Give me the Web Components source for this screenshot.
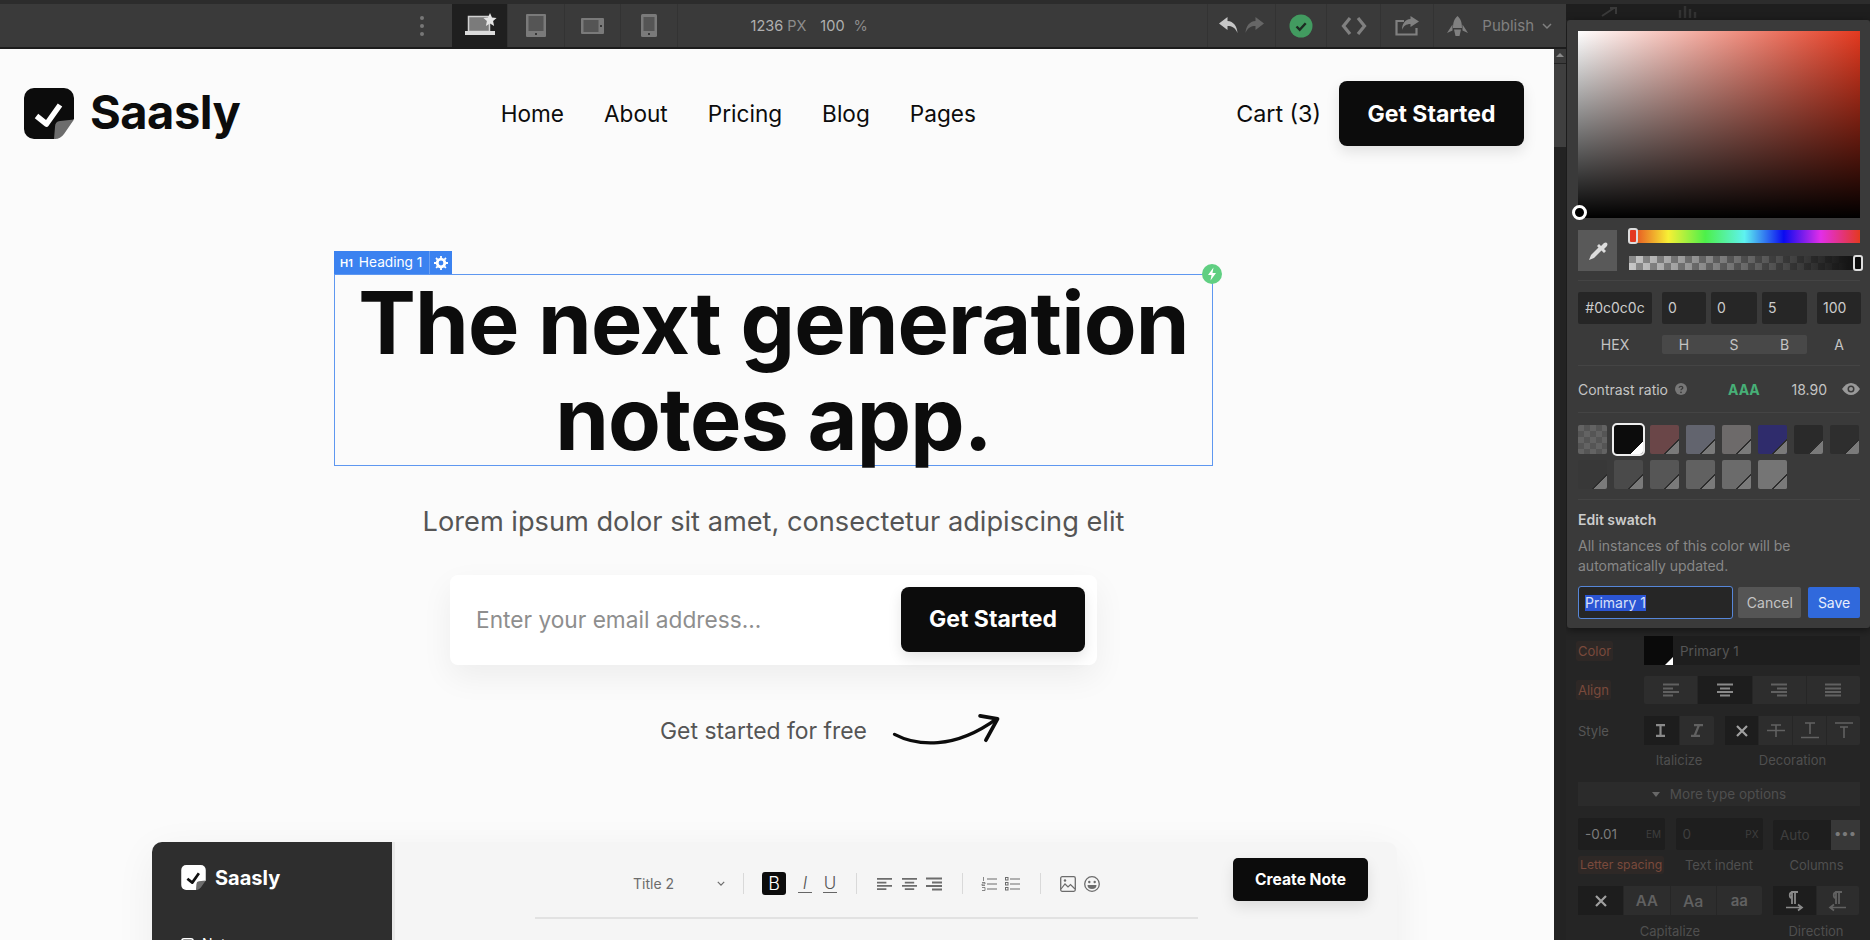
<!DOCTYPE html>
<html>
<head>
<meta charset="utf-8">
<title>Saasly</title>
<style>
  html, body { margin: 0; height: 940px; overflow: hidden; background: #1f1f1f; font-family: Inter, "Liberation Sans", sans-serif; }
  #app { display: grid; grid-template-columns: 1566px 304px; height: 940px; }
  #left { display: flex; flex-direction: column; height: 940px; min-width: 0; }
  #work { display: flex; flex: 1; min-height: 0; }
</style>
</head>
<body>
<div id="app">
  <div id="left">
    <editor-topbar></editor-topbar>
    <div id="work">
      <site-canvas></site-canvas>
      <canvas-scrollbar></canvas-scrollbar>
    </div>
  </div>
  <style-panel></style-panel>
</div>

<script>
const ICONS = {
  laptop: ['32 24', '<rect x="3.5" y="3.5" width="21" height="15" fill="#7b7b7b" stroke="#d0d0d0" stroke-width="1.5"/><rect x="0" y="18" width="30" height="4" fill="#dcdcdc"/><path d="M25 0l2 4.6 4.6.5-3.500 3 1 4.900-4.100-2.500-4.100 2.500 1-4.900-3.500-3 4.600-.5z" fill="#e4e4e4"/>'],
  tabletP: ['20 23', '<rect width="20" height="23" rx="1" fill="#7a7a7a"/><rect x="2.500" y="2" width="15" height="15" fill="#555"/><circle cx="10" cy="20" r="1" fill="#222"/>'],
  tabletL: ['23 16', '<rect width="23" height="16" rx="1" fill="#7a7a7a"/><rect x="2.500" y="2" width="15" height="12" fill="#555"/><circle cx="20" cy="8" r="1" fill="#222"/>'],
  phone: ['16 23', '<rect width="16" height="23" rx="1.500" fill="#7a7a7a"/><rect x="2.500" y="3" width="11" height="14" fill="#555"/><circle cx="8" cy="20" r="1" fill="#222"/>'],
  undo: ['20 17', '<path d="M8.500 0L0 6.500 8.500 13V9c4.500 0 7.500 1.500 10 7C18 9 14.500 4.500 8.500 4z" fill="currentColor"/>'],
  redo: ['20 17', '<path d="M11.500 0L20 6.500 11.500 13V9C7 9 4 10.500 1.500 16 2 9 5.500 4.500 11.500 4z" fill="currentColor"/>'],
  ok: ['24 24', '<circle cx="12" cy="12" r="11.500" fill="#429b60"/><path d="M7.500 12.500l3.200 3.200 6-6.500" fill="none" stroke="#1d2b22" stroke-width="2.400"/>'],
  code: ['26 20', '<path d="M9 2L2.500 10 9 18M17 2l6.500 8L17 18" fill="none" stroke="currentColor" stroke-width="3.200"/>'],
  share: ['24 20', '<path d="M9 5H1.500v13.500h20V12" fill="none" stroke="currentColor" stroke-width="2.200"/><path d="M15.500 0L24 5.500 15.500 11V8C11 8 8.500 10 7 14 7 8 10 3.500 15.500 3z" fill="currentColor"/>'],
  rocket: ['21 20', '<path d="M10.500 0C14 3 15 7 15 12H6c0-5 1-9 4.500-12zM5.500 8.500L0 17l5.500-2.500zM15.500 8.500L21 17l-5.500-2.500zM7 13.500h7L12.500 20h-4z" fill="currentColor"/>'],
  chevron: ['10 6', '<path d="M1 1l4 4 4-4" fill="none" stroke="currentColor" stroke-width="1.500"/>'],
  gear: ['14 14', '<circle cx="7" cy="7" r="3.800" fill="none" stroke="#fff" stroke-width="2.800"/><path d="M7 0v14M0 7h14M2 2l10 10M12 2L2 12" stroke="#fff" stroke-width="1.800" stroke-dasharray="2.200 9.600"/>'],
  bolt: ['20 20', '<circle cx="10" cy="10" r="10" fill="#60cf82"/><path d="M11.500 3.500L6 11h3.500L8.500 16.500 14 9h-3.500z" fill="#fff"/>'],
  logo: ['50 51', '<path d="M10 0h30a10 10 0 0 1 10 10v21L31 51H10A10 10 0 0 1 0 41V10A10 10 0 0 1 10 0z" fill="currentColor"/><path d="M50 31.500L36 33q-5 .5-5 6l-1 12q6 .5 10-5z" fill="#6d6d6d"/><path d="M12.500 28l10 8 13.500-19" fill="none" stroke="var(--check,#fff)" stroke-width="5.500" stroke-linejoin="round"/>'],
  arrow: ['110 36', '<path d="M1 23C24 35 62 39 106 7" fill="none" stroke="#0c0c0c" stroke-width="3.400" stroke-linecap="round"/><path d="M89 4l18 3-12 22" fill="none" stroke="#0c0c0c" stroke-width="3.800" stroke-linecap="round" stroke-linejoin="round"/>'],
  dropper: ['20 20', '<path d="M1 19l2-5 8-8 3 3-8 8z" fill="#ddd"/><path d="M11 3l2 2 3-3q2-1 3 0 1 1 0 3l-3 3 2 2-2 2-7-7z" fill="#ddd"/>'],
  help: ['12 12', '<circle cx="6" cy="6" r="6" fill="#777"/><path d="M4.200 4.800C4.200 2.800 7.800 2.800 7.800 4.800 7.800 6 6 6 6 7.200" fill="none" stroke="#3a3a3a" stroke-width="1.300"/><circle cx="6" cy="9.300" r=".9" fill="#3a3a3a"/>'],
  eye: ['18 12', '<path d="M0 6Q4 0 9 0t9 6q-4 6-9 6T0 6z" fill="#999"/><circle cx="9" cy="6" r="3.500" fill="#3a3a3a"/><circle cx="9" cy="6" r="2" fill="#999"/>'],
  left: ['16 14', '<path d="M0 1.500h16M0 5.500h10M0 9h16M0 12.500h10" stroke="currentColor" stroke-width="2"/>'],
  center: ['16 14', '<path d="M0 1.500h16M3 5.500h10M0 9h16M3 12.500h10" stroke="currentColor" stroke-width="2"/>'],
  right: ['16 14', '<path d="M0 1.500h16M6 5.500h10M0 9h16M6 12.500h10" stroke="currentColor" stroke-width="2"/>'],
  justify: ['16 14', '<path d="M0 1.500h16M0 5.500h16M0 9h16M0 12.500h16" stroke="currentColor" stroke-width="2"/>'],
  ibeam: ['10 13', '<path d="M0 1.200h9M0 11.800h9M4.500 1v11" stroke="currentColor" stroke-width="2.200"/>'],
  italic: ['12 13', '<path d="M3 1.200h9M0 11.800h9M8 1L3.500 12" stroke="currentColor" stroke-width="2.200"/>'],
  x: ['12 12', '<path d="M1 1l10 10M11 1L1 11" stroke="currentColor" stroke-width="2.200"/>'],
  strike: ['18 14', '<path d="M4 1h10M9 1v12M0 6.500h18" stroke="currentColor" stroke-width="1.600"/>'],
  under: ['18 17', '<path d="M4 1h10M9 1v11M0 15.500h18" stroke="currentColor" stroke-width="1.600"/>'],
  over: ['18 17', '<path d="M0 1h18M5 5h8M9 5v11" stroke="currentColor" stroke-width="1.600"/>'],
  ltr: ['17 20', '<path d="M6 13V1h6M9 1v12M6 1.500C3 1.500 3 7 6 7" fill="none" stroke="currentColor" stroke-width="1.800"/><path d="M0 16.500h15M12 13.500l4 3-4 3" fill="none" stroke="currentColor" stroke-width="1.700"/>'],
  rtl: ['17 20', '<path d="M7 13V1h6M10 1v12M7 1.500C4 1.500 4 7 7 7" fill="none" stroke="currentColor" stroke-width="1.800"/><path d="M17 16.500H2M5 13.500l-4 3 4 3" fill="none" stroke="currentColor" stroke-width="1.700"/>'],
  olist: ['15 14', '<path d="M5 2h10M5 7h10M5 12h10" stroke="currentColor" stroke-width="1.200"/><path d="M1.500 0v4M0 5.500h3v1.500H0v1.500h3M0 10.500h3v3H0" fill="none" stroke="currentColor" stroke-width=".8"/>'],
  ulist: ['15 14', '<path d="M5 2h10M5 7h10M5 12h10" stroke="currentColor" stroke-width="1.200"/><rect x=".5" y=".5" width="2.500" height="2.500" fill="none" stroke="currentColor"/><rect x=".5" y="5.500" width="2.500" height="2.500" fill="none" stroke="currentColor"/><rect x=".5" y="10.500" width="2.500" height="2.500" fill="none" stroke="currentColor"/>'],
  image: ['16 16', '<rect x=".7" y=".7" width="14.600" height="14.600" rx="1.500" fill="none" stroke="currentColor" stroke-width="1.300"/><path d="M1 13l4-5 3 3 2.500-2.500L15 13" fill="none" stroke="currentColor" stroke-width="1.200"/><circle cx="5" cy="4.500" r="1.200" fill="currentColor"/>'],
  emoji: ['16 16', '<circle cx="8" cy="8" r="7.300" fill="none" stroke="currentColor" stroke-width="1.300"/><circle cx="5.300" cy="6" r="1.200" fill="currentColor"/><circle cx="10.700" cy="6" r="1.200" fill="currentColor"/><path d="M3.500 9h9q0 4-4.500 4t-4.500-4z" fill="currentColor"/>'],
  notes: ['13 13', '<rect x=".8" y=".8" width="11.400" height="11.400" rx="2" fill="none" stroke="#fff" stroke-width="1.500"/>'],
  dimA: ['16 10', '<path d="M0 9L12 1M8 1h6v6" fill="none" stroke="#3a3a3a" stroke-width="2"/>'],
  dimB: ['18 12', '<path d="M2 12V4M7 12V0M12 12V3M17 12V6" stroke="#333" stroke-width="2.500"/>']
};

// one svg per name, width and height come from the attributes
class UiIcon extends HTMLElement {
  connectedCallback() {
    const icon = ICONS[this.getAttribute('name')];
    const box = icon[0].split(' ');
    const w = this.getAttribute('w') || box[0];
    const h = this.getAttribute('h') || box[1];
    this.attachShadow({mode: 'open'}).innerHTML = `
      <style>:host { display: inline-flex; flex: none; line-height: 0; } svg { display: block; overflow: visible; }</style>
      <svg width="${w}" height="${h}" viewBox="0 0 ${icon[0]}">${icon[1]}</svg>`;
  }
}
customElements.define('ui-icon', UiIcon);

class EditorTopbar extends HTMLElement {
  constructor() {
    super();
    this.attachShadow({mode: 'open'}).innerHTML = `
      <style>
        :host { display: flex; flex: none; height: 49px; box-sizing: border-box; background: #3a3a3a; border-top: 4px solid #2c2c2c; border-bottom: 2px solid #1c1c1c; color: #9a9a9a; font-size: 14.500px; }
        .dots { margin-left: 420px; width: 4px; display: flex; flex-direction: column; justify-content: center; gap: 4px; margin-right: 27.500px; }
        .dots i { display: block; width: 4px; height: 4px; border-radius: 2px; background: #777; }
        .tab { width: 56.500px; box-sizing: border-box; display: flex; align-items: center; justify-content: center; border-right: 1px solid #333; }
        .tab.on { background: #1f1f1f; padding-left: 4px; padding-bottom: 2px; }
        .size { margin-left: 73px; display: flex; align-items: center; gap: 4px; color: #b0b0b0; }
        .size small { font-size: 14.500px; color: #8c8c8c; }
        .size .n2 { margin-left: 10px; }
        .size .n3 { margin-left: 5px; }
        .right { margin-left: auto; display: flex; }
        .cell { display: flex; align-items: center; justify-content: center; border-left: 1px solid #333; color: #808080; }
        .publish { gap: 14px; padding: 0 14px 0 13px; color: #808080; font-size: 15px; }
        .publish ui-icon:last-child { margin-left: -6px; }
      </style>
      <div class="dots"><i></i><i></i><i></i></div>
      <div class="tab on"><ui-icon name="laptop"></ui-icon></div>
      <div class="tab"><ui-icon name="tabletP"></ui-icon></div>
      <div class="tab"><ui-icon name="tabletL"></ui-icon></div>
      <div class="tab"><ui-icon name="phone"></ui-icon></div>
      <div class="size"><span>1236</span><small>PX</small><span class="n2">100</span><small class="n3">%</small></div>
      <div class="right">
        <div class="cell" style="width:67px;gap:5px"><ui-icon name="undo" style="color:#c6c6c6"></ui-icon><ui-icon name="redo" style="color:#666"></ui-icon></div>
        <div class="cell" style="width:50px"><ui-icon name="ok"></ui-icon></div>
        <div class="cell" style="width:53px"><ui-icon name="code"></ui-icon></div>
        <div class="cell" style="width:52px"><ui-icon name="share"></ui-icon></div>
        <div class="cell publish"><ui-icon name="rocket"></ui-icon><span>Publish</span><ui-icon name="chevron"></ui-icon></div>
      </div>`;
  }
}
customElements.define('editor-topbar', EditorTopbar);

class CanvasScrollbar extends HTMLElement {
  constructor() {
    super();
    this.attachShadow({mode: 'open'}).innerHTML = `
      <style>
        :host { display: flex; flex-direction: column; width: 12px; flex: none; background: #232323; }
        .up { height: 14px; background: #3b3b3b; display: flex; justify-content: center; padding-top: 4px; box-sizing: border-box; }
        .up i { width: 0; height: 0; border: 4px solid transparent; border-top: 0; border-bottom: 4px solid #8a8a8a; }
        .thumb { height: 83px; margin-top: 1px; background: #3f3f3f; }
      </style>
      <div class="up"><i></i></div><div class="thumb"></div>`;
  }
}
customElements.define('canvas-scrollbar', CanvasScrollbar);

class DarkButton extends HTMLElement {
  constructor() {
    super();
    this.attachShadow({mode: 'open'}).innerHTML = `
      <style>
        :host { display: inline-flex; flex: none; align-items: center; justify-content: center; background: #0c0c0c; color: #fff; font-weight: 700; border-radius: 8px; box-shadow: 0 6px 14px rgba(0,0,0,.1); box-sizing: border-box; }
      </style><slot></slot>`;
  }
}
customElements.define('dark-button', DarkButton);

class SiteNav extends HTMLElement {
  constructor() {
    super();
    this.attachShadow({mode: 'open'}).innerHTML = `
      <style>
        :host { display: flex; align-items: center; justify-content: space-between; padding: 32px 23px 0 24px; color: #0c0c0c; font-size: 22.600px; }
        .brand { display: flex; align-items: center; gap: 16px; font-size: 47px; font-weight: 700; letter-spacing: -.01em; line-height: 65px; }
        .brand span { margin-top: -4px; }
        .brand ui-icon { margin-top: -1px; }
        .links { display: flex; gap: 40px; }
        .end { display: flex; align-items: center; gap: 18px; font-size: 23.300px; }
        dark-button { width: 185px; height: 65px; font-size: 23px; }
      </style>
      <div class="brand"><ui-icon name="logo"></ui-icon><span>Saasly</span></div>
      <div class="links"><span>Home</span><span>About</span><span>Pricing</span><span>Blog</span><span>Pages</span></div>
      <div class="end"><span>Cart (3)</span><dark-button>Get Started</dark-button></div>`;
  }
}
customElements.define('site-nav', SiteNav);

class SelectedHeading extends HTMLElement {
  constructor() {
    super();
    this.attachShadow({mode: 'open'}).innerHTML = `
      <style>
        :host { display: block; position: relative; width: 879px; box-sizing: border-box; margin: 0 auto; height: 192px; border: 1px solid #5e97f0; }
        h1 { margin: 0; font-size: 86.300px; line-height: 96px; font-weight: 700; letter-spacing: -.01em; color: #0c0c0c; text-align: center; }
        .tag { position: absolute; left: -1px; top: -24px; height: 23px; display: flex; align-items: center; background: #3b82f0; color: #fff; font-size: 13.700px; }
        .tag b { font-size: 11px; font-weight: 600; padding-left: 6px; margin-right: 6px; }
        .tag span { padding-right: 7px; border-right: 1px solid #6a9ff2; line-height: 23px; }
        .tag div { width: 22px; display: flex; justify-content: center; }
        .badge { position: absolute; right: -10px; top: -11px; }
      </style>
      <div class="tag"><b>H1</b><span>Heading 1</span><div><ui-icon name="gear"></ui-icon></div></div>
      <ui-icon class="badge" name="bolt"></ui-icon>
      <h1><slot></slot></h1>`;
  }
}
customElements.define('selected-heading', SelectedHeading);

class SignupForm extends HTMLElement {
  constructor() {
    super();
    this.attachShadow({mode: 'open'}).innerHTML = `
      <style>
        :host { display: flex; align-items: center; justify-content: space-between; width: 647px; height: 90px; box-sizing: border-box; margin: 0 auto; padding: 0 12px 1.500px 26px; background: #fff; border-radius: 8px; box-shadow: 0 12px 32px rgba(0,0,0,.06); }
        span { color: #8e8e8e; font-size: 22.700px; }
        dark-button { width: 184px; height: 65px; font-size: 23px; }
      </style>
      <span>Enter your email address...</span>
      <dark-button>Get Started</dark-button>`;
  }
}
customElements.define('signup-form', SignupForm);

class AppPreview extends HTMLElement {
  constructor() {
    super();
    this.attachShadow({mode: 'open'}).innerHTML = `
      <style>
        :host { display: flex; width: 1245px; height: 300px; margin: 0 0 0 152px; background: #f5f5f5; border-radius: 10px 10px 0 0; box-shadow: 0 10px 40px rgba(0,0,0,.06); }
        .side { width: 240px; flex: none; box-sizing: border-box; padding: 23px 0 0 29px; background: #2e2e2e; border-radius: 10px 0 0 0; color: #fff; box-shadow: 3px 0 0 #e9e9e9; }
        .brand { display: flex; align-items: center; gap: 9px; font-size: 20px; font-weight: 700; --check: #111; }
        .brand ui-icon { color: #fff; }
        .item { display: flex; align-items: center; gap: 8px; margin-top: 47px; font-size: 14px; line-height: 14px; }
        .main { flex: 1; min-width: 0; }
        .bar { display: flex; align-items: center; height: 75px; box-sizing: border-box; padding: 0 29px 0 241px; color: #6c6c6c; font-size: 14px; }
        .tools { display: flex; align-items: center; margin-top: 8px; }
        .bar dark-button { margin-left: auto; width: 135px; height: 43px; font-size: 15.600px; border-radius: 5px; }
        .sep { width: 1px; height: 21px; background: #d9d9d9; flex: none; }
        .b { width: 24px; height: 23px; background: #0c0c0c; color: #fff; border-radius: 3px; display: flex; align-items: center; justify-content: center; font-size: 18px; font-weight: 300; }
        .t { font-size: 17px; font-weight: 300; color: #555; }
        hr { margin: 0 0 0 143px; width: 663px; height: 2px; border: 0; background: #e2e2e2; }
      </style>
      <div class="side">
        <div class="brand"><ui-icon name="logo" w="25" h="25"></ui-icon><span>Saasly</span></div>
        <div class="item"><ui-icon name="notes"></ui-icon><span>Notes</span></div>
      </div>
      <div class="main">
        <div class="bar">
          <div class="tools">
            <span>Title 2</span>
            <ui-icon name="chevron" w="8" h="5" style="margin:0 18px 0 43px"></ui-icon>
            <div class="sep"></div>
            <div class="b" style="margin:0 12px 0 18px">B</div>
            <span class="t" style="font-style:italic;border-bottom:1px solid #666;width:14px;text-align:center;line-height:17px">I</span>
            <span class="t" style="margin:0 19px 0 11px;border-bottom:1px solid #666;width:14px;text-align:center;line-height:17px">U</span>
            <div class="sep"></div>
            <ui-icon name="left" w="15" h="14" style="margin-left:20px"></ui-icon>
            <ui-icon name="center" w="15" h="14" style="margin-left:10px"></ui-icon>
            <ui-icon name="right" w="16" h="14" style="margin-left:9px"></ui-icon>
            <div class="sep" style="margin-left:20px"></div>
            <ui-icon name="olist" style="margin-left:19px"></ui-icon>
            <ui-icon name="ulist" style="margin-left:8px"></ui-icon>
            <div class="sep" style="margin-left:20px"></div>
            <ui-icon name="image" style="margin-left:19px"></ui-icon>
            <ui-icon name="emoji" style="margin-left:8px"></ui-icon>
          </div>
          <dark-button>Create Note</dark-button>
        </div>
        <hr>
      </div>`;
  }
}
customElements.define('app-preview', AppPreview);

class SiteCanvas extends HTMLElement {
  constructor() {
    super();
    this.attachShadow({mode: 'open'}).innerHTML = `
      <style>
        :host { display: block; flex: 1; min-width: 0; background: #fbfbfb; overflow: hidden; padding-right: 7px; font-family: Inter, "Liberation Sans", sans-serif; }
        selected-heading { margin-top: 128px; }
        p { margin: 36px 0 33px; font-size: 27.200px; line-height: 40px; color: #555; text-align: center; }
        .free { display: flex; justify-content: center; align-items: center; gap: 25px; height: 44px; margin: 44px 0 0 113px; font-size: 22.900px; color: #555; }
        .free ui-icon { position: relative; top: -2px; left: 1px; }
        app-preview { margin-top: 89px; }
      </style>
      <site-nav></site-nav>
      <selected-heading>The next generation notes app.</selected-heading>
      <p>Lorem ipsum dolor sit amet, consectetur adipiscing elit</p>
      <signup-form></signup-form>
      <div class="free"><span>Get started for free</span><ui-icon name="arrow" w="108" h="35"></ui-icon></div>
      <app-preview></app-preview>`;
  }
}
customElements.define('site-canvas', SiteCanvas);

class SwatchChip extends HTMLElement {
  connectedCallback() {
    const color = this.getAttribute('color');
    const on = this.hasAttribute('on');
    const corner = on ? 'linear-gradient(135deg, transparent 50%, #fff 50%)' : 'linear-gradient(135deg, transparent 47%, #2c2c2c 47% 56%, #7a7a7a 56%)';
    this.attachShadow({mode: 'open'}).innerHTML = `
      <style>
        :host { display: block; position: relative; height: 29px; border-radius: 2px; overflow: hidden; background: ${color}; ${on ? 'outline: 2px solid #eee; border-radius: 3px;' : ''} }
        i { position: absolute; right: 0; bottom: 0; width: ${on ? 12 : 15}px; height: ${on ? 12 : 15}px; background: ${corner}; }
      </style>${this.hasAttribute('plain') ? '' : '<i></i>'}`;
  }
}
customElements.define('swatch-chip', SwatchChip);

class ColorPopup extends HTMLElement {
  constructor() {
    super();
    const colors = ['#0c0c0c', '#6a4648', '#62646e', '#6d6a6a', '#2f2c6c', '#2a2a2a', '#2e2e2e', '#383838', '#4a4a4a', '#565656', '#616161', '#6b6b6b', '#757575'];
    const chips = colors.map((c, i) => `<swatch-chip color="${c}"${i === 0 ? ' on' : ''}></swatch-chip>`).join('');
    this.attachShadow({mode: 'open'}).innerHTML = `
      <style>
        :host { position: absolute; left: 1px; top: 16px; width: 303px; height: 608px; box-sizing: border-box; padding: 11px 10px 0 11px; background: #3a3a3a; border-radius: 3px; box-shadow: 0 2px 8px rgba(0,0,0,.5); color: #c4c4c4; font-size: 14px; }
        .field { height: 187px; position: relative; background: linear-gradient(to top, #000, transparent), linear-gradient(to right, #fff, #e4391f); }
        .knob { position: absolute; left: -6px; top: 174px; width: 9px; height: 9px; border: 3px solid #fff; border-radius: 50%; background: #000; }
        .tools { display: flex; gap: 12px; margin-top: 12px; }
        .drop { width: 39px; height: 41px; background: #595959; display: flex; align-items: center; justify-content: center; flex: none; }
        .sliders { flex: 1; display: flex; flex-direction: column; }
        .hue, .alpha { position: relative; }
        .hue { height: 13px; background: linear-gradient(90deg, #e4391f, #f7f035 17%, #4df04a 33%, #5ef2f0 50%, #0a0af0 67%, #e22ee8 83%, #e4391f); }
        .alpha { height: 14px; margin-top: 13px; background: linear-gradient(90deg, transparent, #151515 95%), repeating-conic-gradient(#c8c8c8 0 25%, #8c8c8c 0 50%) 0 0 / 14px 14px; }
        .hue i, .alpha i { position: absolute; top: -2px; width: 6px; height: 12px; border: 2px solid #ddd; border-radius: 3px; }
        .hue i { left: -1px; background: #e4391f; }
        .alpha i { right: -3px; background: #0c0c0c; top: -1px; }
        .line { height: 1px; background: #444; }
        .inputs, .names { display: grid; grid-template-columns: 74px 145px 44px; column-gap: 10px; }
        .inputs { margin-top: 11px; }
        .tri { display: grid; grid-template-columns: 44px 46px 45px; column-gap: 5px; }
        .in { height: 32px; line-height: 32px; background: #262626; border-radius: 2px; padding-left: 6px; color: #ccc; }
        .in.hex { text-align: center; padding: 0; }
        .names { margin-top: 11px; height: 19px; line-height: 19px; text-align: center; }
        .names .tri { background: #484848; border-radius: 2px; }
        .contrast { display: flex; align-items: center; height: 46px; }
        .contrast ui-icon:first-of-type { margin-left: 7px; }
        .contrast b { color: #47b077; font-weight: 700; margin-left: 41px; font-size: 14px; }
        .contrast .val { margin-left: auto; margin-right: 15px; }
        .chips { display: grid; grid-template-columns: repeat(8, 29px); gap: 6px 7px; margin-top: 12px; }
        .chk { background: repeating-conic-gradient(#555 0 25%, #636363 0 50%) 0 0 / 12px 12px; }
        h4 { margin: 10px 0 0; color: #ccc; font-size: 14px; font-weight: 600; line-height: 20px; }
        .hint { margin-top: 6px; color: #888; line-height: 20px; }
        .actions { display: flex; gap: 5px; margin-top: 10px; }
        .name { width: 156px; height: 33px; box-sizing: border-box; border: 1px solid #5686d8; border-radius: 3px; background: #262626; padding-left: 6px; display: flex; align-items: center; }
        .name span { background: #2b55d4; color: #d8e0f8; line-height: 16px; }
        .btn { height: 31px; line-height: 31px; text-align: center; background: #555; border-radius: 2px; width: 63px; margin-top: 1px; }
        .btn.save { background: #3069dc; color: #e8eefc; width: 52px; margin-left: 2px; }
      </style>
      <div class="field"><div class="knob"></div></div>
      <div class="tools">
        <div class="drop"><ui-icon name="dropper"></ui-icon></div>
        <div class="sliders"><div class="hue"><i></i></div><div class="alpha"><i></i></div></div>
      </div>
      <div class="line" style="margin-top:9px"></div>
      <div class="inputs">
        <div class="in hex">#0c0c0c</div>
        <div class="tri"><div class="in">0</div><div class="in">0</div><div class="in">5</div></div>
        <div class="in">100</div>
      </div>
      <div class="names"><span>HEX</span><div class="tri"><span>H</span><span>S</span><span>B</span></div><span>A</span></div>
      <div class="line" style="margin-top:11px"></div>
      <div class="contrast"><span>Contrast ratio</span><ui-icon name="help"></ui-icon><b>AAA</b><span class="val">18.90</span><ui-icon name="eye"></ui-icon></div>
      <div class="line"></div>
      <div class="chips"><swatch-chip class="chk" color="transparent" plain></swatch-chip>${chips}</div>
      <div class="line" style="margin-top:10px"></div>
      <h4>Edit swatch</h4>
      <div class="hint">All instances of this color will be<br>automatically updated.</div>
      <div class="actions"><div class="name"><span>Primary 1</span></div><div class="btn">Cancel</div><div class="btn save">Save</div></div>`;
  }
}
customElements.define('color-popup', ColorPopup);

class StylePanel extends HTMLElement {
  constructor() {
    super();
    this.attachShadow({mode: 'open'}).innerHTML = `
      <style>
        :host { display: block; position: relative; height: 940px; box-sizing: border-box; padding: 0 10px 0 12px; background: #252525; color: #565656; font-size: 13px; border-top: 4px solid #2c2c2c; overflow: hidden; }
        .covered { height: 616px; }
        .row { display: flex; align-items: center; }
        .lab { width: 66px; flex: none; }
        .red { color: #7a4a3c; background: #2e2826; padding: 2px 2px; margin-left: -2px; border-radius: 2px; white-space: nowrap; }
        .colorf { flex: 1; height: 29px; display: flex; align-items: center; background: #1e1e1e; color: #555; font-size: 13.500px; gap: 7px; }
        .sw { width: 29px; height: 29px; background: #0a0a0a; position: relative; overflow: hidden; }
        .sw i { position: absolute; right: 0; bottom: 0; border-style: solid; border-width: 0 0 8px 8px; border-color: transparent transparent #fff transparent; }
        .seg { display: flex; background: #2d2d2d; border-radius: 2px; height: 100%; }
        .seg > div { display: flex; align-items: center; justify-content: center; flex: 1; border-left: 1px solid #262626; color: #616161; }
        .seg > div.on { background: #1d1d1d; color: #8a8a8a; }
        .caps { text-align: center; color: #4f4f4f; }
        .more { margin-top: 13px; height: 24px; background: #2b2b2b; display: flex; align-items: center; justify-content: center; gap: 10px; color: #4f4f4f; font-size: 13.500px; }
        .more i { border-style: solid; border-width: 5px 4.500px 0; border-color: #686868 transparent transparent; }
        .three { display: grid; grid-template-columns: 87px 87px 87px; column-gap: 10.500px; }
        .num { height: 32px; display: flex; align-items: center; justify-content: space-between; background: #1e1e1e; padding: 0 4px 0 7px; border-radius: 2px; color: #3f3f3f; font-size: 13.500px; }
        .num small { font-size: 10px; color: #3e3e3e; }
        .dotsb { width: 29px; height: 100%; margin-right: -4px; background: #383838; color: #7a7a7a; text-align: center; line-height: 26px; font-weight: 700; letter-spacing: 1px; }
        .glyph { color: #5e5e5e; font-size: 15px; font-weight: 600; }
        .top { display: flex; align-items: center; height: 16px; background: #1e1e1e; margin: 0 -10px 0 -12px; padding-left: 36px; gap: 60px; }
      </style>
      <div class="top"><ui-icon name="dimA"></ui-icon><ui-icon name="dimB"></ui-icon></div>
      <div class="covered"></div>
      <color-popup></color-popup>
      <div class="row"><span class="lab"><span class="red">Color</span></span><div class="colorf"><div class="sw"><i></i></div><span>Primary 1</span></div></div>
      <div class="row" style="margin-top:11px;height:28px"><span class="lab"><span class="red">Align</span></span>
        <div class="seg" style="flex:1"><div style="border:0"><ui-icon name="left"></ui-icon></div><div class="on"><ui-icon name="center"></ui-icon></div><div><ui-icon name="right"></ui-icon></div><div><ui-icon name="justify"></ui-icon></div></div>
      </div>
      <div class="row" style="margin-top:12px;height:29px"><span class="lab">Style</span>
        <div class="seg" style="width:70px"><div class="on" style="border:0"><ui-icon name="ibeam"></ui-icon></div><div><ui-icon name="italic"></ui-icon></div></div>
        <div class="seg" style="width:135px;margin-left:11px"><div class="on" style="border:0;color:#a0a0a0"><ui-icon name="x"></ui-icon></div><div><ui-icon name="strike"></ui-icon></div><div><ui-icon name="under"></ui-icon></div><div><ui-icon name="over"></ui-icon></div></div>
      </div>
      <div class="row caps" style="margin-top:6px;height:18px"><span style="width:66px"></span><span style="width:70px">Italicize</span><span style="width:135px;margin-left:11px">Decoration</span></div>
      <div class="more"><i></i><span>More type options</span></div>
      <div class="three" style="margin-top:12px">
        <div class="num" style="color:#7c7c7c"><span>-0.01</span><small>EM</small></div>
        <div class="num"><span>0</span><small>PX</small></div>
        <div class="num" style="height:30px;margin-top:2px"><span>Auto</span><span class="dotsb">•••</span></div>
      </div>
      <div class="three caps" style="margin-top:6px;height:18px;line-height:18px"><span class="red" style="justify-self:start;margin-left:0;padding:0 2px;font-size:12.200px">Letter spacing</span><span>Text indent</span><span>Columns</span></div>
      <div class="row" style="margin-top:12px;height:29px">
        <div class="seg" style="width:184px"><div class="on" style="border:0;color:#a0a0a0"><ui-icon name="x"></ui-icon></div><div class="glyph">AA</div><div class="glyph" style="font-weight:500;font-size:16px">Aa</div><div class="glyph">aa</div></div>
        <div class="seg" style="width:86px;margin-left:11px"><div class="on" style="border:0;color:#8a8a8a"><ui-icon name="ltr"></ui-icon></div><div><ui-icon name="rtl"></ui-icon></div></div>
      </div>
      <div class="row caps" style="margin-top:7px;height:18px"><span style="width:184px">Capitalize</span><span style="width:86px;margin-left:11px">Direction</span></div>`;
  }
}
customElements.define('style-panel', StylePanel);
</script>
</body>
</html>
